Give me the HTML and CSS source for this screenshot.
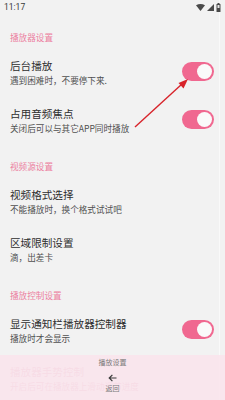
FILE: index.html
```html
<!DOCTYPE html>
<html lang="zh">
<head>
<meta charset="utf-8">
<title>播放设置</title>
<link rel="stylesheet" href="styles.css">
</head>
<body>
<div class="screen">
  <div class="page">
    <div class="statusbar">
      <span class="time">11:17</span>
      <span class="sys-icons">
        <svg width="9" height="7" viewBox="0 0 9 7"><path d="M0 1.2 Q4.5 -1.2 9 1.2 L4.5 7 Z" fill="#4a4a4a"/></svg>
        <svg width="7" height="7" viewBox="0 0 7 7"><path d="M7 0 L7 7 L0 7 Z" fill="#4a4a4a"/></svg>
        <svg width="5" height="9" viewBox="0 0 5 9"><rect x="1.5" y="0" width="2" height="1" fill="#4a4a4a"/><rect x="0.5" y="1" width="4" height="8" rx="0.6" fill="#4a4a4a"/><rect x="1.5" y="2" width="2" height="3" fill="#e8e8e8"/></svg>
      </span>
    </div>

    <div class="section-title">播放器设置</div>
    <div class="item">
      <div class="texts">
        <div class="title">后台播放</div>
        <div class="sub">遇到困难时，不要停下来.</div>
      </div>
      <span class="switch on"></span>
    </div>
    <div class="item">
      <div class="texts">
        <div class="title">占用音频焦点</div>
        <div class="sub">关闭后可以与其它APP同时播放</div>
      </div>
      <span class="switch on"></span>
    </div>

    <div class="section-title">视频源设置</div>
    <div class="item">
      <div class="texts">
        <div class="title">视频格式选择</div>
        <div class="sub">不能播放时，换个格式试试吧</div>
      </div>
    </div>
    <div class="item">
      <div class="texts">
        <div class="title">区域限制设置</div>
        <div class="sub">滴，出差卡</div>
      </div>
    </div>

    <div class="section-title">播放控制设置</div>
    <div class="item">
      <div class="texts">
        <div class="title">显示通知栏播放器控制器</div>
        <div class="sub">播放时才会显示</div>
      </div>
      <span class="switch on"></span>
    </div>
    <div class="item faded">
      <div class="texts">
        <div class="title">播放器手势控制</div>
        <div class="sub">开启后可在播放器上滑动调节进度</div>
      </div>
    </div>
  </div>

  <svg class="annot" width="225" height="400" viewBox="0 0 225 400">
    <line x1="135" y1="127" x2="182" y2="84" stroke="#d8232a" stroke-width="1.4"/>
    <path d="M188 79 L178.5 83 L183.5 88.5 Z" fill="#d8232a"/>
  </svg>

  <div class="overlay">
    <div class="ov-title">播放设置</div>
    <div class="ov-back">
      <svg width="9" height="8" viewBox="0 0 9 8"><path d="M8.5 4 H1.2 M4.4 0.8 L1.2 4 L4.4 7.2" fill="none" stroke="#3a3a3a" stroke-width="1.2"/></svg>
      <span class="ov-label">返回</span>
    </div>
  </div>
</div>
</body>
</html>
```
FILE: styles.css
```css
html, body {
  margin: 0;
  padding: 0;
  background: #f2f2f2;
}
body {
  font-family: "Noto Sans CJK SC", "Noto Sans", sans-serif;
  width: 225px;
  height: 400px;
  overflow: hidden;
}
.screen {
  position: relative;
  width: 225px;
  height: 400px;
  overflow: hidden;
}
.page {
  width: 219px;
  height: 400px;
  border-right: 1px solid #f9f9f9;
  box-sizing: content-box;
}
.statusbar {
  height: 15px;
  display: flex;
  align-items: center;
  justify-content: space-between;
  padding: 0 0 0 4px;
  width: 221px;
}
.time {
  font-family: "Roboto", "Noto Sans", sans-serif;
  font-size: 8.5px;
  color: #3a3a3a;
  line-height: 15px;
}
.sys-icons {
  display: flex;
  align-items: center;
  gap: 2px;
  padding-right: 4px;
}
.section-title {
  padding: 16px 10px 5px;
  font-size: 8.6px;
  line-height: 12px;
  color: #ec7fa0;
}
.item {
  height: 48px;
  box-sizing: border-box;
  padding: 10px 5px 8px 10px;
  display: flex;
  align-items: flex-start;
  justify-content: space-between;
}
.texts {
  display: flex;
  flex-direction: column;
}
.title {
  font-size: 10.6px;
  line-height: 15px;
  color: #2e2e2e;
}
.sub {
  font-size: 8.6px;
  line-height: 15px;
  color: #505050;
}
.faded .title,
.faded .sub {
  color: #d98aa6;
}
.switch {
  position: relative;
  width: 32px;
  height: 19px;
  border-radius: 10px;
  background: #f06890;
  margin-top: 4px;
  flex-shrink: 0;
}
.switch::after {
  content: "";
  position: absolute;
  right: 2px;
  top: 2px;
  width: 15px;
  height: 15px;
  border-radius: 50%;
  background: #fafafa;
}
.annot {
  position: absolute;
  left: 0;
  top: 0;
  pointer-events: none;
}
.overlay {
  position: absolute;
  left: 0;
  bottom: 0;
  width: 225px;
  height: 45px;
  background: rgba(250, 228, 236, 0.9);
  display: flex;
  flex-direction: column;
  align-items: center;
}
.ov-title {
  margin-top: 2px;
  font-size: 7px;
  line-height: 10px;
  color: #7a7a7a;
}
.ov-back {
  margin-top: 7px;
  display: flex;
  flex-direction: column;
  align-items: center;
}
.ov-label {
  font-size: 7px;
  line-height: 10px;
  color: #7a7a7a;
  margin-top: 1px;
}
```
